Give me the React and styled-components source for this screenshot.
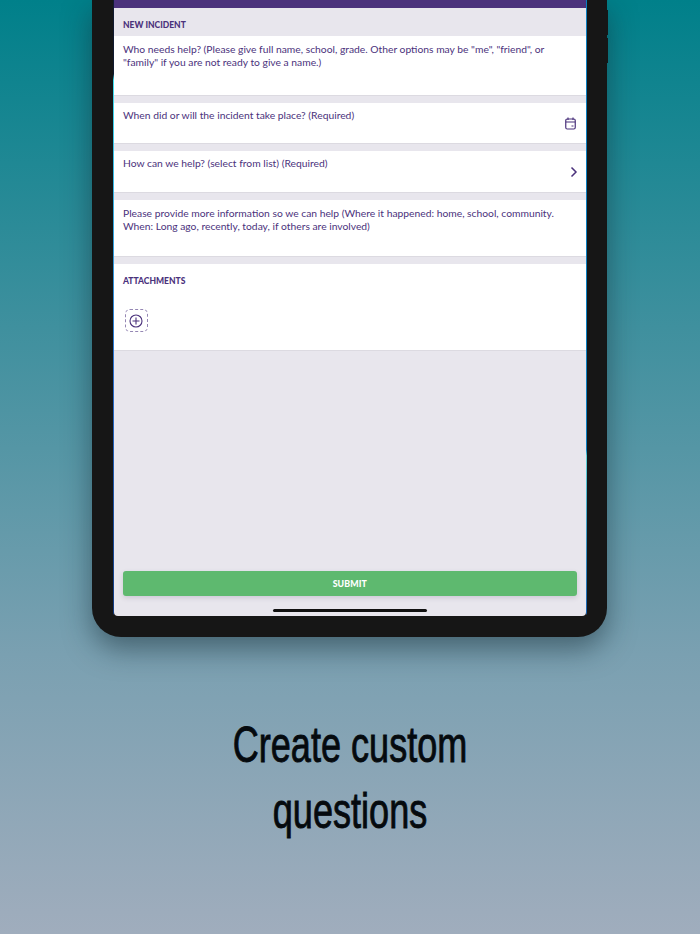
import React from "react";
import styled, { createGlobalStyle } from "styled-components";

const GlobalStyle = createGlobalStyle`
  html, body {
    margin: 0;
    padding: 0;
  }
  * {
    box-sizing: border-box;
  }
`;

const Page = styled.div`
  width: 700px;
  height: 934px;
  overflow: hidden;
  display: flex;
  flex-direction: column;
  align-items: center;
  background: linear-gradient(180deg, #00808a 0%, #3f909e 35%, #7aa0b1 70%, #a0adbd 100%);
`;

const Device = styled.div`
  position: relative;
  width: 515px;
  height: 637px;
  margin-right: 1px;
  flex-shrink: 0;
  padding: 0 20px 21px 21px;
  background: #161616;
  border-radius: 0 0 29px 29px;
  box-shadow: 0 12px 28px rgba(20, 40, 50, 0.5);
`;

const SideButton = styled.span`
  position: absolute;
  right: -1px;
  top: ${(p) => p.$top}px;
  width: 1px;
  height: 25px;
  background: #161616;
`;

const ScreenEdge = styled.div`
  height: 100%;
  padding: 0 1.5px 0 1px;
  border-radius: 0 0 4px 4px;
  background:
    linear-gradient(180deg, #0a7fc0 0%, #0a7fc0 73%, #5fd3d8 74%, #1560b0 100%) right / 1.5px 100% no-repeat,
    linear-gradient(180deg, #101a30 0%, #101a30 12%, #3fe0f0 13%, #2a70d0 60%, #123a80 100%) left / 1px 100% no-repeat;
`;

const Screen = styled.div`
  height: 100%;
  display: flex;
  flex-direction: column;
  background: #e8e6ed;
  color: #4b327c;
  font-family: Lato, "Open Sans", sans-serif;
  font-size: 10.3px;
  line-height: 12.5px;
  border-radius: 0 0 4px 4px;
  overflow: hidden;
`;

const TopBar = styled.div`
  height: 8px;
  flex-shrink: 0;
  background: #4b327c;
`;

const SectionTitle = styled.div`
  height: 28px;
  flex-shrink: 0;
  padding: 10.5px 9px 0;
  font-size: 8.5px;
  font-weight: 900;
  line-height: 12px;
`;

const Field = styled.div`
  height: ${(p) => p.$height}px;
  flex-shrink: 0;
  margin-bottom: 7px;
  padding: ${(p) => p.$top}px 9px 0;
  display: flex;
  align-items: flex-start;
  justify-content: space-between;
  background: #fff;
  border-bottom: 1px solid #dcdae1;
  white-space: nowrap;
`;

const FieldIcon = styled.svg`
  flex-shrink: 0;
  margin-top: ${(p) => p.$top}px;
  margin-right: ${(p) => p.$right}px;
`;

const AttachTitle = styled(SectionTitle)`
  height: auto;
  padding: 0;
`;

const Attachments = styled.div`
  height: 87px;
  flex-shrink: 0;
  padding: 10.5px 10px 0 9px;
  background: #fff;
  border-bottom: 1px solid #dcdae1;
`;

const AddBox = styled.div`
  width: 23px;
  height: 23px;
  margin-top: 22.5px;
  margin-left: 1.5px;
  display: flex;
  align-items: center;
  justify-content: center;
  border: 1.2px dashed #9587b4;
  border-radius: 5px;
`;

const Footer = styled.div`
  margin-top: auto;
  padding: 0 9px 4px;
  display: flex;
  flex-direction: column;
  align-items: center;
`;

const SubmitButton = styled.button`
  width: 100%;
  height: 25px;
  border: none;
  border-radius: 3px;
  background: #5eb96f;
  box-shadow: 0 2px 5px rgba(60, 50, 90, 0.16);
  color: #fff;
  font-family: Lato, "Open Sans", sans-serif;
  font-size: 8.8px;
  font-weight: 900;
  letter-spacing: 0.1px;
`;

const HomeIndicator = styled.div`
  width: 154px;
  height: 3px;
  margin-top: 13px;
  border-radius: 2px;
  background: #111;
`;

const Caption = styled.h1`
  margin: 0;
  padding-top: 75px;
  width: 100%;
  text-align: center;
  font-family: "Liberation Sans", sans-serif;
  font-weight: 400;
  font-size: 50px;
  line-height: 66px;
  color: #050a0e;
  -webkit-text-stroke: 0.9px #050a0e;
  transform: scaleX(0.722);
`;

export default function App() {
  return (
    <Page>
      <GlobalStyle />
      <Device>
        <SideButton $top={10} />
        <SideButton $top={38} />
        <ScreenEdge>
          <Screen>
            <TopBar />
            <SectionTitle>NEW INCIDENT</SectionTitle>
            <Field $height={60} $top={7}>
              <span>
                Who needs help? (Please give full name, school, grade. Other options may be "me", "friend", or
                <br />
                "family" if you are not ready to give a name.)
              </span>
            </Field>
            <Field $height={41} $top={6}>
              <span>When did or will the incident take place? (Required)</span>
              <FieldIcon $top={8} $right={1} width="11" height="13" viewBox="0 0 22 26" fill="none" stroke="#4b327c" strokeWidth="2.4">
                <rect x="1.5" y="4" width="19" height="20" rx="3" />
                <path d="M1.5 10h19M6 1v5M16 1v5M13 18h4" />
              </FieldIcon>
            </Field>
            <Field $height={42} $top={6}>
              <span>How can we help? (select from list) (Required)</span>
              <FieldIcon $top={9} $right={-1} width="10" height="12" viewBox="0 0 10 12" fill="none" stroke="#4b327c" strokeWidth="1.5">
                <path d="M3.5 1.5 8 6 3.5 10.5" />
              </FieldIcon>
            </Field>
            <Field $height={57} $top={7}>
              <span>
                Please provide more information so we can help (Where it happened: home, school, community.
                <br />
                When: Long ago, recently, today, if others are involved)
              </span>
            </Field>
            <Attachments>
              <AttachTitle>ATTACHMENTS</AttachTitle>
              <AddBox>
                <svg width="14" height="14" viewBox="0 0 14 14" fill="none" stroke="#4b327c" strokeWidth="1.1">
                  <circle cx="7" cy="7" r="6" />
                  <path d="M7 3.5v7M3.5 7h7" />
                </svg>
              </AddBox>
            </Attachments>
            <Footer>
              <SubmitButton>SUBMIT</SubmitButton>
              <HomeIndicator />
            </Footer>
          </Screen>
        </ScreenEdge>
      </Device>
      <Caption>
        Create custom
        <br />
        questions
      </Caption>
    </Page>
  );
}
